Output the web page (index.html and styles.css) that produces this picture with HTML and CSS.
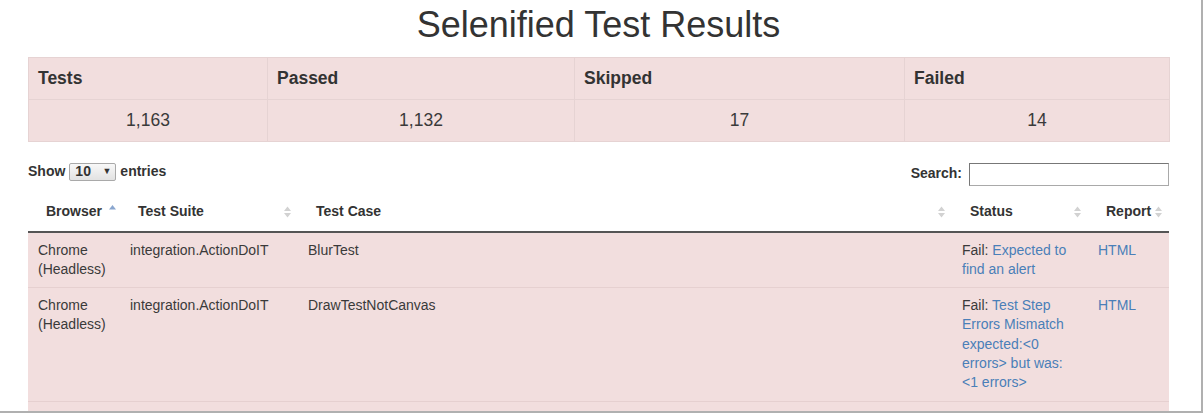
FILE: index.html
```html
<!DOCTYPE html>
<html>
<head>
<meta charset="utf-8">
<title>Selenified Test Results</title>
<link rel="stylesheet" href="styles.css">
</head>
<body>
<div class="page">
  <h1 class="title">Selenified Test Results</h1>
  <table class="summary">
    <colgroup><col class="s1"><col class="s2"><col class="s3"><col class="s4"></colgroup>
    <tr><th>Tests</th><th>Passed</th><th>Skipped</th><th>Failed</th></tr>
    <tr><td>1,163</td><td>1,132</td><td>17</td><td>14</td></tr>
  </table>

  <div class="controls">
    <div class="length">Show <span class="select">10 <span class="caret">▼</span></span> entries</div>
    <div class="search">Search: <span class="input"></span></div>
  </div>

  <table class="results">
    <colgroup><col class="c1"><col class="c2"><col class="c3"><col class="c4"><col class="c5"></colgroup>
    <thead>
      <tr>
        <th>Browser<svg class="sort asc" width="7" height="12" viewBox="0 0 7 12"><path d="M0 5.5 L3.5 1 L7 5.5 Z"/></svg></th>
        <th>Test Suite<svg class="sort" width="7" height="12" viewBox="0 0 7 12"><path d="M0 5 L3.5 0.5 L7 5 Z M0 7 L3.5 11.5 L7 7 Z"/></svg></th>
        <th>Test Case<svg class="sort" width="7" height="12" viewBox="0 0 7 12"><path d="M0 5 L3.5 0.5 L7 5 Z M0 7 L3.5 11.5 L7 7 Z"/></svg></th>
        <th>Status<svg class="sort" width="7" height="12" viewBox="0 0 7 12"><path d="M0 5 L3.5 0.5 L7 5 Z M0 7 L3.5 11.5 L7 7 Z"/></svg></th>
        <th>Report<svg class="sort" width="7" height="12" viewBox="0 0 7 12"><path d="M0 5 L3.5 0.5 L7 5 Z M0 7 L3.5 11.5 L7 7 Z"/></svg></th>
      </tr>
    </thead>
    <tbody>
      <tr>
        <td>Chrome (Headless)</td>
        <td>integration.ActionDoIT</td>
        <td>BlurTest</td>
        <td><span class="fail">Fail:</span> <a>Expected to find an alert</a></td>
        <td><a>HTML</a></td>
      </tr>
      <tr>
        <td>Chrome (Headless)</td>
        <td>integration.ActionDoIT</td>
        <td>DrawTestNotCanvas</td>
        <td><span class="fail">Fail:</span> <a>Test Step Errors Mismatch expected:&lt;0 errors&gt; but was: &lt;1 errors&gt;</a></td>
        <td><a>HTML</a></td>
      </tr>
      <tr>
        <td>Chrome (Headless)</td>
        <td>integration.ActionGetIT</td>
        <td>GetCookieTestWithOptionsContentsTestDomain</td>
        <td><span class="fail">Fail:</span> <a>Test Step Errors Mismatch</a></td>
        <td><a>HTML</a></td>
      </tr>
    </tbody>
  </table>
</div>
<div class="frame"></div>
</body>
</html>
```

FILE: styles.css
```css
html, body {
  margin: 0;
  padding: 0;
  background: #fff;
}
body {
  font-family: "Liberation Sans", Arial, Helvetica, sans-serif;
  font-size: 14px;
  line-height: 1.42857;
  color: #333;
  overflow: hidden;
}
.page {
  width: 1141px;
  margin-left: 28px;
}
.title {
  margin: 5px 0 12px;
  font-size: 36px;
  font-weight: 400;
  line-height: 1.1;
  text-align: center;
  color: #333;
}
table {
  border-collapse: collapse;
  border-spacing: 0;
  table-layout: fixed;
  width: 1141px;
}
.summary {
  margin-bottom: 21px;
  font-size: 17.5px;
  background: #f2dede;
  border: 1px solid #e6d3d3;
}
.summary th, .summary td {
  padding: 8px 9px;
  border: 1px solid #e6d3d3;
  line-height: 25px;
}
.summary th {
  text-align: left;
  font-weight: 700;
}
.summary td {
  text-align: center;
  color: #3a3a3a;
}
.s1 { width: 239px; }
.s2 { width: 307px; }
.s3 { width: 330px; }
.s4 { width: 265px; }

.controls {
  display: flex;
  justify-content: space-between;
  align-items: flex-start;
  font-weight: 700;
}
.length {
  display: flex;
  align-items: center;
  height: 18px;
}
.select {
  display: inline-flex;
  align-items: center;
  justify-content: space-between;
  box-sizing: border-box;
  width: 47px;
  height: 18px;
  margin: 0 4px;
  padding: 0 4px 0 5px;
  border: 1px solid #a9a9a9;
  border-radius: 2px;
  background: linear-gradient(#f8f8f8, #e2e2e2);
  font-size: 14px;
  font-weight: 700;
  color: #333;
}
.caret {
  font-size: 9px;
  color: #333;
}
.search {
  display: flex;
  align-items: center;
  height: 23px;
  margin-bottom: 5px;
}
.input {
  display: inline-block;
  box-sizing: border-box;
  width: 200px;
  height: 23px;
  margin-left: 7px;
  border: 1px solid #a9a9a9;
  border-top-color: #777;
  border-left-color: #777;
  background: #fff;
}

.results thead th {
  position: relative;
  padding: 10px 18px;
  text-align: left;
  font-weight: 700;
  line-height: 20px;
  border-bottom: 2px solid #555;
  white-space: nowrap;
}
.sort {
  position: absolute;
  right: 7px;
  top: 15px;
  fill: #d2d2d2;
}
.sort.asc {
  right: 4px;
  top: 13px;
  fill: #8aa6cf;
}
.c1 { width: 92px; }
.c2 { width: 178px; }
.c3 { width: 654px; }
.c4 { width: 136px; }
.c5 { width: 81px; }

.results tbody tr {
  background: #f2dede;
}
.results tbody td {
  padding: 8px 10px;
  vertical-align: top;
  line-height: 19.3px;
  border-top: 1px solid #e6d0d0;
  color: #3a3a3a;
}
.results tbody tr:first-child td {
  border-top: none;
}
.results a {
  color: #4a7fb8;
  text-decoration: none;
}

.frame {
  position: fixed;
  left: 0;
  top: 0;
  box-sizing: border-box;
  width: 1203px;
  height: 413px;
  border-right: 2px solid #b0b0b0;
  border-bottom: 2px solid #b0b0b0;
  pointer-events: none;
}
```
